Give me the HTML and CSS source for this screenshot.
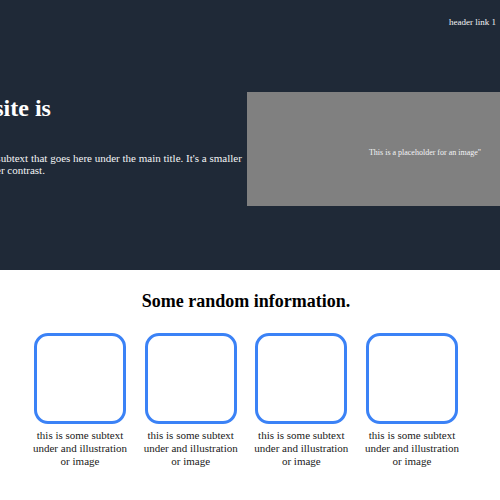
FILE: index.html
```html
<!DOCTYPE html>
<html>
<head>
<meta charset="utf-8">
<link rel="stylesheet" href="styles.css">
</head>
<body>
<section class="hero">
  <header class="topbar">
    <a class="toplink">header link 1</a>
  </header>
  <div class="hero-main">
    <div class="hero-text">
      <h1 class="hero-title">Your site is</h1>
      <p class="hero-sub">This is some subtext that goes here under the main title. It's a smaller text with lower contrast.</p>
    </div>
    <div class="hero-image">This is a placeholder for an image"</div>
  </div>
</section>
<section class="info">
  <h2 class="info-title">Some random information.</h2>
  <div class="cards">
    <div class="card"><div class="card-box"></div><p class="card-text">this is some subtext under and illustration or image</p></div>
    <div class="card"><div class="card-box"></div><p class="card-text">this is some subtext under and illustration or image</p></div>
    <div class="card"><div class="card-box"></div><p class="card-text">this is some subtext under and illustration or image</p></div>
    <div class="card"><div class="card-box"></div><p class="card-text">this is some subtext under and illustration or image</p></div>
  </div>
</section>
</body>
</html>
```
FILE: styles.css
```css
html, body {
  margin: 0;
  padding: 0;
  overflow: hidden;
  background: #ffffff;
  font-family: "Liberation Serif", "Times New Roman", serif;
}

.hero {
  background: #1f2937;
  height: 270px;
  overflow: hidden;
  color: #ffffff;
}

.topbar {
  display: flex;
  justify-content: flex-end;
  height: 40px;
  padding: 17px 4px 0 0;
  box-sizing: border-box;
  font-size: 9px;
}

.toplink {
  color: #f3f4f6;
}

.hero-main {
  display: flex;
  align-items: flex-start;
  padding-top: 52px;
}

.hero-text {
  flex: 0 0 305px;
  margin-left: -62px;
  padding-top: 3px;
  margin-right: 4px;
}

.hero-title {
  margin: 0;
  font-size: 24px;
  font-weight: bold;
  color: #ffffff;
}

.hero-sub {
  margin: 30px 0 0 0;
  font-size: 11px;
  color: #f3f4f6;
}

.hero-image {
  flex: 0 0 356px;
  height: 114px;
  box-sizing: border-box;
  padding-top: 7px;
  background: #808080;
  color: #f3f4f6;
  font-size: 8px;
  display: flex;
  align-items: center;
  justify-content: center;
}

.info {
  padding: 21px 8px 0 0;
  text-align: center;
}

.info-title {
  margin: 0;
  font-size: 18px;
  font-weight: bold;
  color: #000000;
}

.cards {
  display: flex;
  justify-content: center;
  gap: 10.67px;
  margin-top: 20.5px;
}

.card {
  width: 100px;
  display: flex;
  flex-direction: column;
  align-items: center;
}

.card-box {
  width: 92px;
  height: 91px;
  box-sizing: border-box;
  border: 3px solid #3b82f6;
  border-radius: 14px;
}

.card-text {
  margin: 5.5px 0 0 0;
  font-size: 11px;
  line-height: 13px;
  color: #1a1a1a;
}
```
